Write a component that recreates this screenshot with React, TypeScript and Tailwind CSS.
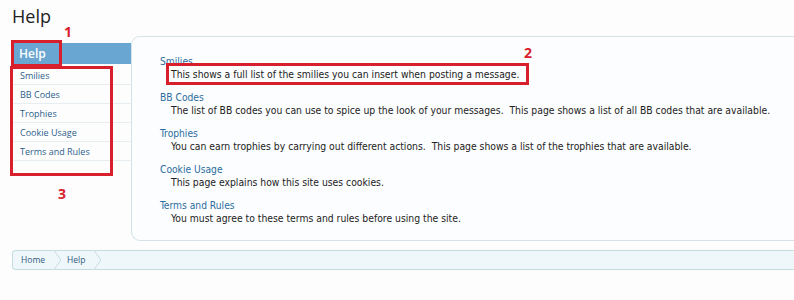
const SIDEBAR_LINKS = ['Smilies', 'BB Codes', 'Trophies', 'Cookie Usage', 'Terms and Rules'];

const HELP_PAGES = [
  { title: 'Smilies', description: 'This shows a full list of the smilies you can insert when posting a message.' },
  {
    title: 'BB Codes',
    description:
      'The list of BB codes you can use to spice up the look of your messages.  This page shows a list of all BB codes that are available.',
  },
  {
    title: 'Trophies',
    description:
      'You can earn trophies by carrying out different actions.  This page shows a list of the trophies that are available.',
  },
  { title: 'Cookie Usage', description: 'This page explains how this site uses cookies.' },
  { title: 'Terms and Rules', description: 'You must agree to these terms and rules before using the site.' },
];

function CrumbArrow() {
  return (
    <svg width="9" height="20" viewBox="0 0 9 20" className="shrink-0">
      <path d="M0.5 0 L8 10 L0.5 20" fill="none" stroke="#c5dbe2" strokeWidth="1" />
    </svg>
  );
}

export default function App() {
  return (
    <div className="relative w-[794px] h-[300px] overflow-hidden bg-[#fdfdfe] font-['DejaVu_Sans_Condensed','DejaVu_Sans',sans-serif]">
      <h1 className="pl-3 pt-[5px] h-[36px] text-[18px] leading-[22px] text-[#222] font-['Open_Sans',sans-serif]">Help</h1>

      <div className="flex items-start">
        {/* Sidebar nav */}
        <div className="w-[119px] ml-3 mt-[7px] shrink-0">
          <div className="h-[21px] bg-[#6aa6d2] pl-[7px] text-[12px] leading-[22px] font-semibold text-white font-['Open_Sans',sans-serif]">
            Help
          </div>
          <ul className="pt-[2px]">
            {SIDEBAR_LINKS.map((link) => (
              <li
                key={link}
                className="h-[19px] border-b border-[#e6eef2] pl-[8px] text-[9px] leading-[19px] text-[#2e5f8a] font-['Open_Sans',sans-serif]"
              >
                {link}
              </li>
            ))}
          </ul>
        </div>

        {/* Content panel */}
        <div className="flex-1 h-[205px] border border-r-0 border-[#d5e3e8] rounded-l-[9px] bg-[#fcfdfe] pl-[28px] pt-[18px]">
          <dl className="flex flex-col gap-[11px]">
            {HELP_PAGES.map((page) => (
              <div key={page.title}>
                <dt className="text-[10.2px] leading-[13px] text-[#2b6d9e]">{page.title}</dt>
                <dd className="pl-[11px] text-[10.3px] leading-[12px] text-[#222] whitespace-pre">{page.description}</dd>
              </div>
            ))}
          </dl>
        </div>
      </div>

      {/* Breadcrumb */}
      <div className="ml-3 mt-[9px] h-[20px] flex items-center border border-r-0 border-[#c5dbe2] rounded-l-[4px] bg-[#f0f7fb] text-[8.5px] text-[#2d5a80] font-['Open_Sans',sans-serif]">
        <span className="pl-[8px] pr-[8px]">Home</span>
        <CrumbArrow />
        <span className="pl-[5px] pr-[8px]">Help</span>
        <CrumbArrow />
      </div>

      {/* Annotation overlays */}
      <div className="absolute left-[11px] top-[40px] w-[51px] h-[27px] border-[3px] border-[#d8202c]" />
      <span className="absolute left-[64px] top-[21px] text-[14px] font-bold text-[#d8202c] font-['Open_Sans',sans-serif]">1</span>
      <div className="absolute left-[166px] top-[63px] w-[363px] h-[22px] border-[3px] border-[#d8202c]" />
      <span className="absolute left-[524px] top-[42px] text-[14px] font-bold text-[#d8202c] font-['Open_Sans',sans-serif]">2</span>
      <div className="absolute left-[10px] top-[66px] w-[103px] h-[110px] border-[3px] border-[#d8202c]" />
      <span className="absolute left-[58px] top-[183px] text-[14px] font-bold text-[#d8202c] font-['Open_Sans',sans-serif]">3</span>
    </div>
  );
}
